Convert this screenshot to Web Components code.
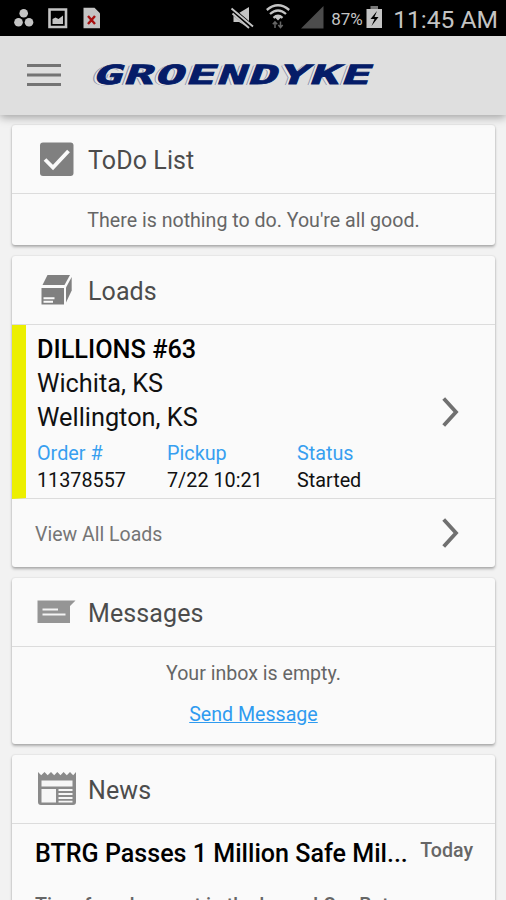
<!DOCTYPE html>
<html lang="en">
<head>
<meta charset="utf-8">
<title>Groendyke</title>
<style>
    html, body {
        margin: 0;
        height: 900px;
        overflow: hidden;
    }
    body {
        background: #f2f2f2;
        font-family: Roboto, "Liberation Sans", sans-serif;
        color: #111;
    }
    main {
        display: flex;
        flex-direction: column;
        gap: 11px;
        padding: 10px 11px 0 12px;
    }
</style>
</head>
<body>
<status-bar percent="87%" time="11:45 AM"></status-bar>
<app-header>GROENDYKE</app-header>
<main>
    <info-card icon="todo" heading="ToDo List">
        <empty-note>There is nothing to do. You're all good.</empty-note>
    </info-card>
    <info-card icon="loads" heading="Loads">
        <load-row name="DILLIONS #63" from="Wichita, KS" to="Wellington, KS" order="11378557" pickup="7/22 10:21" status="Started"></load-row>
        <link-row>View All Loads</link-row>
    </info-card>
    <info-card icon="messages" heading="Messages">
        <empty-note link="Send Message">Your inbox is empty.</empty-note>
    </info-card>
    <info-card icon="news" heading="News">
        <news-item heading="BTRG Passes 1 Million Safe Mil..." date="Today">Time for a banquet in the house! Our Baton</news-item>
    </info-card>
</main>

<script>
const Icons = {
    todo: `<svg width="42" height="40" viewBox="0 0 42 40">
        <rect x="4" y="3.5" width="33.5" height="33.5" rx="3" fill="#808080"/>
        <path d="M9 20.5l8 8L32.500 12" fill="none" stroke="#fafafa" stroke-width="3.8"/>
    </svg>`,
    loads: `<svg width="42" height="40" viewBox="0 0 42 40" fill="#808080">
        <path d="M11.5 5h22.500l-5.5 10H6.500z"/>
        <path d="M5.5 18h22.5V34.500H5.5z"/>
        <path d="M30 17.5l5.700-10.500v13.500L30 32.500z"/>
        <path d="M7.500 28.300h11M7.500 31.700h9.500" stroke="#fafafa" stroke-width="2"/>
    </svg>`,
    messages: `<svg width="42" height="40" viewBox="0 0 42 40">
        <path d="M1.500 8.500h38l-5.500 5.500v17H1.500z" fill="#959595"/>
        <path d="M6.500 17.500h15.500M6.500 22.500h23" stroke="#f4f4f4" stroke-width="1.800"/>
    </svg>`,
    news: `<svg width="42" height="40" viewBox="0 0 42 40">
        <path d="M2 3l3.200 3.300L8.500 3l3.200 3.300L15 3l3.200 3.300L21.300 3l3.200 3.300L27.600 3l3.200 3.300L34 3l3.200 3.300L40 3v30q0 3-3 3H5q-3 0-3-3z" fill="#8a8a8a"/>
        <path d="M5.500 11.500h31v6h-31zM5.500 20H20v13.500H5.500zM22.500 20h14v2h-14zM22.500 24h14v2h-14zM22.500 28h14v2h-14zM22.500 31.700h14v1.800h-14z" fill="#f6f6f6"/>
    </svg>`
};

const Chevron = `<svg width="18" height="32" viewBox="0 0 18 32">
    <path d="M2.700 2.500l12.300 13.500L2.700 29.500" fill="none" stroke="#707070" stroke-width="3.800"/>
</svg>`;

class StatusBar extends HTMLElement {

    constructor() {
        super();
        this.attachShadow({ mode: 'open' });
    }

    connectedCallback() {
        var _percent = this.getAttribute('percent');
        var _time = this.getAttribute('time');

        this.shadowRoot.innerHTML = `
        <style>
            :host {
                display: flex;
                justify-content: space-between;
                height: 36px;
                background: #000;
                color: #c4c4c4;
            }
            svg {
                display: block;
            }
            .side {
                display: flex;
                align-items: center;
            }
            .percent {
                font-size: 17px;
                width: 35px;
                margin-left: 5px;
                padding-top: 1px;
            }
            .time {
                font-size: 24.6px;
                margin: 2px 8px 0 10px;
                white-space: nowrap;
            }
        </style>
        <div class="side">
            <svg width="110" height="36" viewBox="0 0 110 36" fill="#c4c4c4">
                <circle cx="23.700" cy="13.300" r="4.300"/>
                <circle cx="18.500" cy="22.300" r="4.300"/>
                <circle cx="29" cy="22.300" r="4.300"/>
                <path d="M49.500 9.500h16.500v17.500H49.500z" fill="none" stroke="#c4c4c4" stroke-width="2.600"/>
                <path d="M52.500 24v-5l3-1.500 3 1.500 4.500-3.500v8.500z"/>
                <path d="M83.500 7.700h11l5.500 5.500V28.300H83.500z"/>
                <path d="M88 16l7 8M95 16l-7 8" stroke="#a81010" stroke-width="2.400"/>
            </svg>
        </div>
        <div class="side">
            <svg width="96" height="36" viewBox="0 0 96 36">
                <path d="M3.500 13h5.500l10-6v21l-10-6H3.500z" fill="#c4c4c4"/>
                <path d="M1 9.500L22.500 28" stroke="#000" stroke-width="6"/>
                <path d="M1.500 8.500L23 26.500M2.500 13.500L19 28" stroke="#c4c4c4" stroke-width="1.900"/>
                <g fill="none" stroke="#c4c4c4" stroke-width="2.300">
                    <path d="M36.800 10q11.200-9.500 22.400 0"/>
                    <path d="M40 14q8-7 16 0"/>
                    <path d="M43.500 17.800q4.500-4 9 0"/>
                </g>
                <path d="M44.500 17h7L48 20.500z" fill="#c4c4c4"/>
                <path d="M45 28v-6M42.800 24.300l2.200-2.500 2.200 2.500M50.500 21.500v6M48.300 25l2.200 2.500 2.200-2.500" fill="none" stroke="#666" stroke-width="1.500"/>
                <path d="M93.500 6v22.500H71z" fill="#4c4c4c"/>
            </svg>
            <span class="percent">${_percent}</span>
            <svg width="17" height="36" viewBox="0 0 17 36">
                <path d="M4.500 6h7.500v3H4.500z" fill="#777"/>
                <path d="M.500 9h15.500v19H.500z" fill="#c4c4c4"/>
                <path d="M11 11l-6.500 8h4L5.500 26l7-9H8.500z" fill="#000"/>
            </svg>
            <span class="time">${_time}</span>
        </div>
        `;
    }

}
customElements.define('status-bar', StatusBar);

class AppHeader extends HTMLElement {

    constructor() {
        super();
        this.attachShadow({ mode: 'open' });
    }

    connectedCallback() {
        this.shadowRoot.innerHTML = `
        <style>
            :host {
                display: flex;
                align-items: center;
                position: relative;
                height: 79px;
                box-sizing: border-box;
                padding: 0 0 1px 27px;
                background: #dfdfdf;
                box-shadow: 0 2px 9px rgba(0,0,0,.36);
            }
            /* slanted, stretched wordmark with an outlined shade on its left */
            .brand {
                margin-left: 34px;
                font: bold 26.5px/30px "DejaVu Sans Mono", monospace;
                letter-spacing: .9px;
                color: #051c68;
                -webkit-text-stroke: .8px #051c68;
                transform-origin: 0 50%;
                transform: skewX(-20deg) scaleX(1.84);
                text-shadow: -.6px .3px 0 #e6e6e6, -1.5px .7px 0 #e6e6e6, -2px 1.2px 0 #8d94ac;
            }
        </style>
        <svg width="34" height="26" viewBox="0 0 34 26">
            <path d="M0 3.500h34M0 13h34M0 22.500h34" stroke="#747474" stroke-width="3.200"/>
        </svg>
        <div class="brand"><slot></slot></div>
        `;
    }

}
customElements.define('app-header', AppHeader);

class InfoCard extends HTMLElement {

    constructor() {
        super();
        this.attachShadow({ mode: 'open' });
    }

    connectedCallback() {
        var _icon = this.getAttribute('icon');
        var _heading = this.getAttribute('heading');

        this.shadowRoot.innerHTML = `
        <style>
            :host {
                display: block;
                background: #fafafa;
                border-radius: 3px;
                box-shadow: 0 2px 3px rgba(0,0,0,.28), 0 0 2px rgba(0,0,0,.14);
            }
            header {
                display: flex;
                align-items: center;
                gap: 10px;
                height: 69px;
                box-sizing: border-box;
                padding-left: 24px;
                border-bottom: 1px solid #dcdcdc;
                font-size: 25px;
                letter-spacing: .1px;
                color: #4c4c4c;
            }
            span {
                padding-top: 3px;
            }
        </style>
        <header>${Icons[_icon]}<span>${_heading}</span></header>
        <slot></slot>
        `;
    }

}
customElements.define('info-card', InfoCard);

class EmptyNote extends HTMLElement {

    constructor() {
        super();
        this.attachShadow({ mode: 'open' });
    }

    connectedCallback() {
        var _link = this.getAttribute('link');

        this.shadowRoot.innerHTML = `
        <style>
            :host {
                display: flex;
                flex-direction: column;
                align-items: center;
                gap: 17px;
                padding: 15px 0 12px;
                font-size: 19.6px;
                line-height: 24px;
                color: #666;
            }
            :host([link]) {
                padding-bottom: 17px;
            }
            a {
                color: #2f9bf0;
                text-decoration: underline;
            }
        </style>
        <div><slot></slot></div>
        ${_link ? `<a>${_link}</a>` : ''}
        `;
    }

}
customElements.define('empty-note', EmptyNote);

class LoadRow extends HTMLElement {

    constructor() {
        super();
        this.attachShadow({ mode: 'open' });
    }

    connectedCallback() {
        var _name = this.getAttribute('name');
        var _from = this.getAttribute('from');
        var _to = this.getAttribute('to');
        var _order = this.getAttribute('order');
        var _pickup = this.getAttribute('pickup');
        var _status = this.getAttribute('status');

        this.shadowRoot.innerHTML = `
        <style>
            :host {
                display: flex;
                align-items: center;
                justify-content: space-between;
                height: 174px;
                box-sizing: border-box;
                padding: 0 36px 0 11px;
                border-left: 14px solid #ecef00;
                border-bottom: 1px solid #dcdcdc;
                font-size: 25.3px;
                line-height: 34px;
            }
            .stop {
                align-self: flex-start;
                padding-top: 8px;
            }
            b {
                font-weight: 500;
                color: #000;
            }
            dl {
                display: grid;
                grid-template-columns: 130px 130px 90px;
                margin: 5px 0 0;
                font-size: 19.8px;
                line-height: 27px;
            }
            dt {
                color: #379ff0;
            }
            dd {
                margin: 0;
                grid-row: 2;
            }
        </style>
        <div class="stop">
            <div><b>${_name}</b></div>
            <div>${_from}</div>
            <div>${_to}</div>
            <dl>
                <dt>Order #</dt><dd>${_order}</dd>
                <dt>Pickup</dt><dd>${_pickup}</dd>
                <dt>Status</dt><dd>${_status}</dd>
            </dl>
        </div>
        ${Chevron}
        `;
    }

}
customElements.define('load-row', LoadRow);

class LinkRow extends HTMLElement {

    constructor() {
        super();
        this.attachShadow({ mode: 'open' });
    }

    connectedCallback() {
        this.shadowRoot.innerHTML = `
        <style>
            :host {
                display: flex;
                align-items: center;
                justify-content: space-between;
                height: 68px;
                padding: 0 36px 0 23px;
                font-size: 19.5px;
                color: #757575;
            }
            span {
                padding-top: 2px;
            }
        </style>
        <span><slot></slot></span>
        ${Chevron}
        `;
    }

}
customElements.define('link-row', LinkRow);

class NewsItem extends HTMLElement {

    constructor() {
        super();
        this.attachShadow({ mode: 'open' });
    }

    connectedCallback() {
        var _heading = this.getAttribute('heading');
        var _date = this.getAttribute('date');

        this.shadowRoot.innerHTML = `
        <style>
            :host {
                display: block;
                padding: 13px 22px 20px 23px;
                color: #666;
                font-size: 19.6px;
                font-weight: 500;
            }
            .top {
                display: flex;
                justify-content: space-between;
                height: 34px;
            }
            h2 {
                margin: 0;
                font-size: 25.1px;
                font-weight: 500;
                line-height: 34px;
                color: #000;
                white-space: nowrap;
            }
            time {
                line-height: 27px;
            }
            p {
                margin: 22px 0 0;
                line-height: 26px;
                white-space: nowrap;
            }
        </style>
        <div class="top"><h2>${_heading}</h2><time>${_date}</time></div>
        <p><slot></slot></p>
        `;
    }

}
customElements.define('news-item', NewsItem);
</script>
</body>
</html>
